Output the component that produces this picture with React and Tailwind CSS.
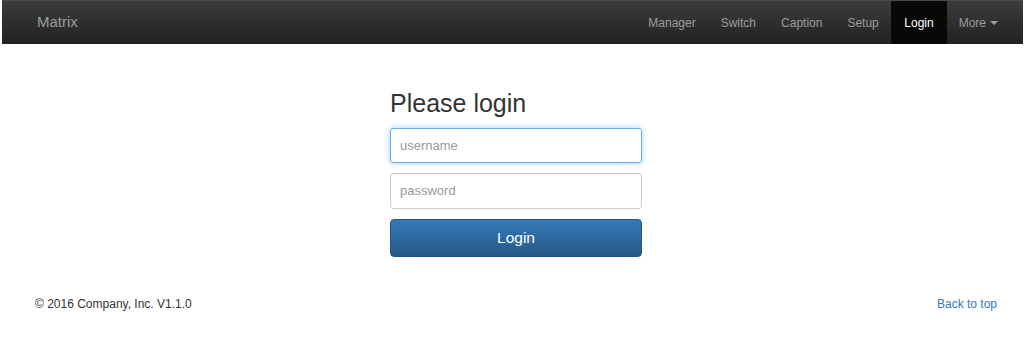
import React from 'react';

const navItems = ['Manager', 'Switch', 'Caption', 'Setup'];

export default function App() {
    return (
        <div className="w-[1026px] h-[346px] bg-white overflow-hidden" style={{ fontFamily: '"Liberation Sans", Arial, sans-serif' }}>
            {/* Top navbar */}
            <div className="mx-[2px] mr-[3px] h-[44px] flex items-stretch justify-between border-t border-[#4a4a4a] bg-gradient-to-b from-[#3c3c3c] to-[#222222]">
                <div className="flex items-center pl-[35px] text-[15px] text-[#9d9d9d]">Matrix</div>
                <div className="flex items-stretch pr-[25px] text-[12px]">
                    {navItems.map((item) => (
                        <div key={item} className="flex items-center px-[12.5px] text-[#9d9d9d]">
                            {item}
                        </div>
                    ))}
                    <div className="flex items-center px-[13px] bg-[#080808] text-white">Login</div>
                    <div className="flex items-center pl-[12px] pr-0 text-[#9d9d9d]">
                        More
                        <span className="ml-[4px] inline-block w-0 h-0 border-x-[4px] border-x-transparent border-t-[4px] border-t-[#9d9d9d]" />
                    </div>
                </div>
            </div>

            {/* Login form */}
            <div className="flex justify-center pl-[6px]">
                <div className="w-[252px] mt-[46px]">
                    <h2 className="text-[25px] leading-[27.5px] text-[#333] mb-[10px]">Please login</h2>
                    <input
                        className="block w-full h-[35px] px-[9px] text-[13px] text-[#555] rounded-[3px] border border-[#66afe9] shadow-[0_0_6px_rgba(102,175,233,0.6)] outline-none placeholder:text-[#999]"
                        placeholder="username"
                    />
                    <input
                        className="block w-full h-[36px] mt-[10px] px-[9px] text-[13px] text-[#555] rounded-[3px] border border-[#ccc] shadow-[inset_0_1px_1px_rgba(0,0,0,0.075)] outline-none placeholder:text-[#999]"
                        placeholder="password"
                    />
                    <button className="block w-full h-[38px] mt-[10px] rounded-[4px] border border-[#245580] bg-gradient-to-b from-[#337ab7] to-[#265a88] text-white text-[15.5px]">
                        Login
                    </button>
                </div>
            </div>

            {/* Footer */}
            <div className="flex justify-between items-center mt-[38px] pl-[35px] pr-[29px] text-[12px]">
                <span className="text-[#333]">© 2016 Company, Inc. V1.1.0</span>
                <span className="text-[#337ab7]">Back to top</span>
            </div>
        </div>
    );
}
